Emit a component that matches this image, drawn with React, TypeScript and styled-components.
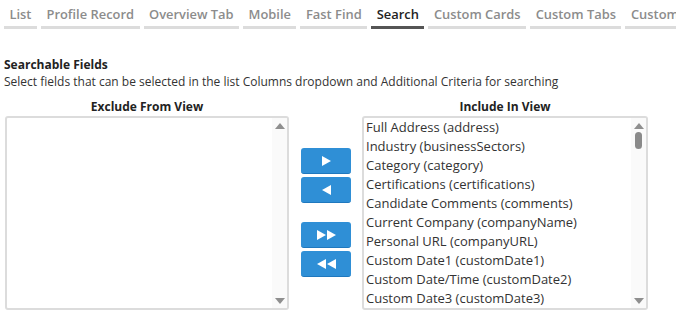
import React from 'react'
import styled, { createGlobalStyle } from 'styled-components'

const GlobalStyle = createGlobalStyle`
  html, body {
    margin: 0;
    padding: 0;
    background: #fff;
    overflow: hidden;
  }
  body {
    font-family: "Open Sans", "Liberation Sans", sans-serif;
    color: #333;
  }
`

const tabs = ['List', 'Profile Record', 'Overview Tab', 'Mobile', 'Fast Find', 'Search', 'Custom Cards', 'Custom Tabs', 'Custom Fields']

const included = [
  'Full Address (address)',
  'Industry (businessSectors)',
  'Category (category)',
  'Certifications (certifications)',
  'Candidate Comments (comments)',
  'Current Company (companyName)',
  'Personal URL (companyURL)',
  'Custom Date1 (customDate1)',
  'Custom Date/Time (customDate2)',
  'Custom Date3 (customDate3)',
]

const Page = styled.div`
  width: 676px;
  height: 324px;
  overflow: hidden;
`

const TabBar = styled.div`
  display: flex;
  gap: 4px;
  padding-left: 4px;
  white-space: nowrap;
  overflow: hidden;
`

const Tab = styled.div<{ $active?: boolean }>`
  flex: none;
  height: 26px;
  line-height: 28px;
  padding: 0 5.5px;
  font-size: 12.9px;
  font-weight: 600;
  color: ${p => (p.$active ? '#222' : '#8c8c8c')};
  border-bottom: 3px solid ${p => (p.$active ? '#555' : '#dcdcdc')};
`

const Section = styled.div`
  padding: 27px 5px 0 4px;
`

const Title = styled.div`
  font-size: 12px;
  font-weight: 700;
  line-height: 17px;
  color: #222;
`

const Desc = styled.div`
  font-size: 12px;
  line-height: 17px;
  color: #333;
`

const Columns = styled.div`
  display: grid;
  grid-template-columns: 284px 50px 285px;
  column-gap: 12px;
  margin-top: 8px;
  padding-left: 1px;
  & > :nth-child(3) { margin-left: -1px; }
`

const Column = styled.div`
  display: flex;
  flex-direction: column;
`

const ColHeader = styled.div`
  text-align: center;
  font-size: 12px;
  font-weight: 700;
  line-height: 17px;
  color: #222;
  margin-bottom: 1px;
`

const ListBox = styled.div`
  height: 194px;
  box-sizing: border-box;
  border: 2px solid #dcdcdc;
  border-radius: 3px;
  display: flex;
  overflow: hidden;
`

const Items = styled.div`
  flex: 1;
  padding-left: 2px;
`

const Item = styled.div`
  font-size: 13px;
  line-height: 19px;
  color: #333;
  white-space: nowrap;
`

const ScrollTrack = styled.div`
  width: 15px;
  background: #fafafa;
  display: flex;
  flex-direction: column;
  align-items: center;
  padding: 5px 0 4px;
`

const Thumb = styled.div`
  width: 7px;
  height: 17px;
  border-radius: 4px;
  background: #8a8a8a;
  margin-top: 3px;
`

const Spacer = styled.div`
  flex: 1;
`

const Arrow = ({ down }: { down?: boolean }) => (
  <svg width="10" height="6" viewBox="0 0 10 6">
    <path d={down ? 'M0 0H10L5 6Z' : 'M0 6H10L5 0Z'} fill="#8f8f8f" />
  </svg>
)

const ButtonCol = styled.div`
  display: flex;
  flex-direction: column;
  padding-top: 50px;
`

const Group = styled.div`
  display: flex;
  flex-direction: column;
  gap: 3px;
  margin-bottom: 19px;
`

const MoveButton = styled.div`
  height: 26px;
  border-radius: 3px;
  background: #2f8fd6;
  border-bottom: 1px solid #1f78be;
  box-sizing: border-box;
  display: flex;
  align-items: center;
  justify-content: center;
  gap: 1px;
`

const Tri = ({ left }: { left?: boolean }) => (
  <svg width="9" height="10" viewBox="0 0 9 10">
    <path d={left ? 'M9 0V10L0 5Z' : 'M0 0V10L9 5Z'} fill="#fff" />
  </svg>
)

const Scroll = ({ thumb }: { thumb?: boolean }) => (
  <ScrollTrack>
    <Arrow />
    {thumb && <Thumb />}
    <Spacer />
    <Arrow down />
  </ScrollTrack>
)

export default function App() {
  return (
    <Page>
      <GlobalStyle />
      <TabBar>
        {tabs.map(t => (
          <Tab key={t} $active={t === 'Search'}>{t}</Tab>
        ))}
      </TabBar>
      <Section>
        <Title>Searchable Fields</Title>
        <Desc>Select fields that can be selected in the list Columns dropdown and Additional Criteria for searching</Desc>
        <Columns>
          <Column>
            <ColHeader>Exclude From View</ColHeader>
            <ListBox>
              <Items />
              <Scroll />
            </ListBox>
          </Column>
          <ButtonCol>
            <Group>
              <MoveButton><Tri /></MoveButton>
              <MoveButton><Tri left /></MoveButton>
            </Group>
            <Group>
              <MoveButton><Tri /><Tri /></MoveButton>
              <MoveButton><Tri left /><Tri left /></MoveButton>
            </Group>
          </ButtonCol>
          <Column>
            <ColHeader>Include In View</ColHeader>
            <ListBox>
              <Items>
                {included.map(i => <Item key={i}>{i}</Item>)}
              </Items>
              <Scroll thumb />
            </ListBox>
          </Column>
        </Columns>
      </Section>
    </Page>
  )
}
